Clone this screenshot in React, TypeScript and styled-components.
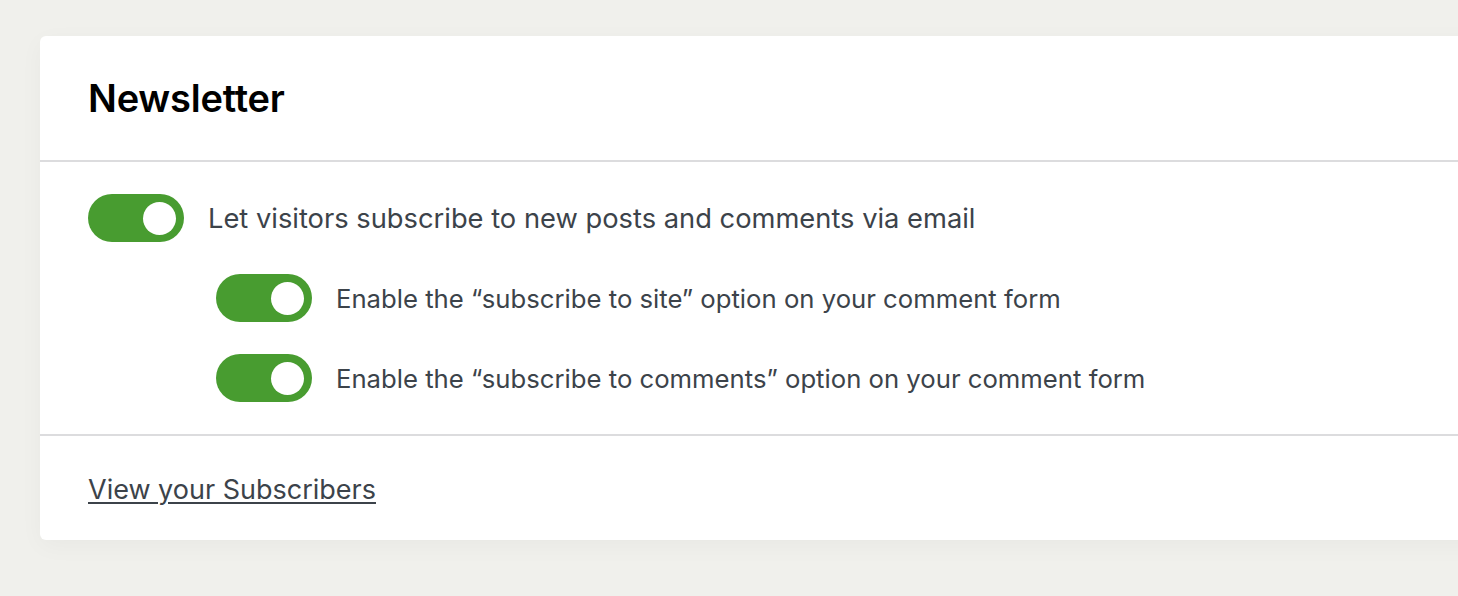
import React from "react";
import styled, { createGlobalStyle } from "styled-components";

const Global = createGlobalStyle`
  html, body { margin: 0; padding: 0; }
  body {
    background: #f0f0ec;
    font-family: Inter, "Noto Sans", sans-serif;
    overflow: hidden;
    width: 1458px;
    height: 596px;
  }
`;

const Page = styled.div`
  padding: 36px 0 0 40px;
  height: 596px;
  box-sizing: border-box;
`;

const Card = styled.section`
  width: 1480px;
  height: 504px;
  background: #fff;
  border-radius: 6px;
  box-shadow: 0 6px 24px rgba(0, 0, 0, 0.035);
  display: flex;
  flex-direction: column;
`;

const Header = styled.header`
  height: 126px;
  box-sizing: border-box;
  border-bottom: 2px solid #dcdcde;
  padding: 0 48px;
  display: flex;
  align-items: center;
`;

const Title = styled.h2`
  margin: 0;
  font-size: 38px;
  font-weight: 600;
  color: #000;
  letter-spacing: -0.2px;
`;

const Body = styled.div`
  padding: 32px 48px;
  border-bottom: 2px solid #dcdcde;
  display: flex;
  flex-direction: column;
  gap: 32px;
`;

const Row = styled.label<{ $indent?: boolean }>`
  display: flex;
  align-items: center;
  gap: 24px;
  padding-left: ${(p) => (p.$indent ? "128px" : "0")};
  font-size: ${(p) => (p.$indent ? "25.7px" : "27.3px")};
  color: #3c434a;
`;

const Track = styled.span`
  flex: none;
  width: 96px;
  height: 48px;
  border-radius: 24px;
  background: #489c30;
  display: flex;
  align-items: center;
  justify-content: flex-end;
  padding-right: 8px;
  box-sizing: border-box;
`;

const Knob = styled.span`
  width: 33px;
  height: 33px;
  border-radius: 50%;
  background: #fff;
`;

const Footer = styled.div`
  flex: 1;
  padding: 0 48px;
  display: flex;
  align-items: center;
`;

const Link = styled.a`
  font-size: 27px;
  color: #3c434a;
  text-decoration: underline;
  text-underline-offset: 3px;
  text-decoration-thickness: 2px;
  margin-top: 2px;
`;

const Toggle = () => (
  <Track>
    <Knob />
  </Track>
);

export default function App() {
  return (
    <Page>
      <Global />
      <Card>
        <Header>
          <Title>Newsletter</Title>
        </Header>
        <Body>
          <Row>
            <Toggle />
            Let visitors subscribe to new posts and comments via email
          </Row>
          <Row $indent>
            <Toggle />
            Enable the “subscribe to site” option on your comment form
          </Row>
          <Row $indent>
            <Toggle />
            Enable the “subscribe to comments” option on your comment form
          </Row>
        </Body>
        <Footer>
          <Link href="#">View your Subscribers</Link>
        </Footer>
      </Card>
    </Page>
  );
}
